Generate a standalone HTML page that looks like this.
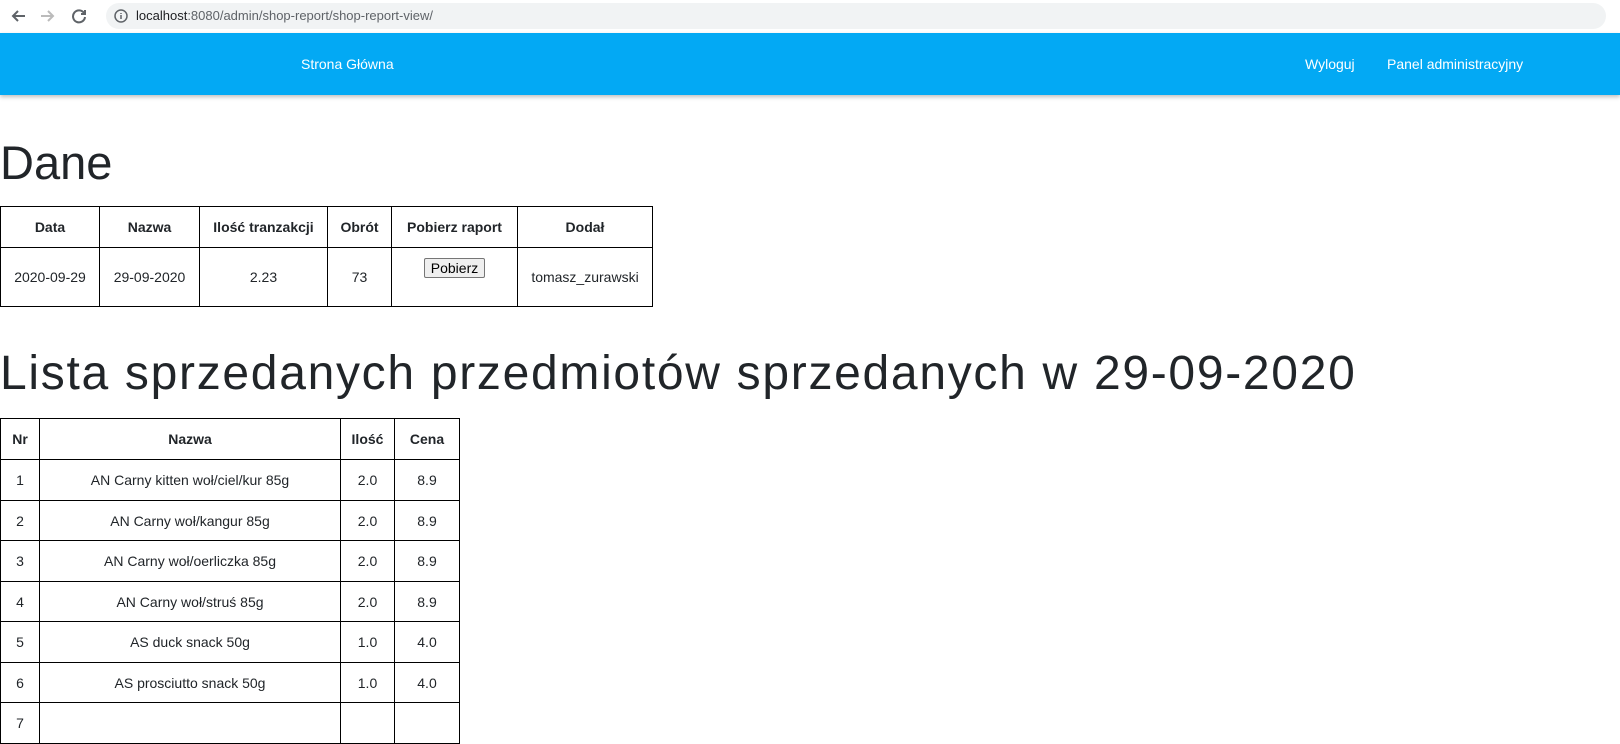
<!DOCTYPE html>
<html><head><meta charset="utf-8"><style>
body{margin:0;width:1620px;height:735px;overflow:hidden;background:#fff;font-family:"Liberation Sans",sans-serif;color:#212529;position:relative}
.chrome{position:absolute;left:0;top:0;width:1620px;height:33px;background:#fff}
.url{position:absolute;left:106px;top:3px;width:1500px;height:26px;border-radius:13px;background:#f1f3f4;font-size:13px;line-height:26px;color:#202124}
.nav{position:absolute;left:0;top:33px;width:1620px;height:62px;background:#03a9f4;box-shadow:0 2px 4px rgba(0,0,0,.25);color:#fff;font-size:14px}
.nav span{position:absolute;top:23px}
h1{position:absolute;left:0;margin:0;font-weight:normal;font-size:47px;line-height:1;color:#212529}
table{position:absolute;left:0;border-collapse:collapse;font-size:14px;table-layout:fixed}
td,th{border:1px solid #000;text-align:center;padding:0}
th{font-weight:bold}
</style></head><body>
<div class="chrome">
<svg style="position:absolute;left:10px;top:8px" width="80" height="16" viewBox="0 0 80 16" fill="none" stroke-width="2"><path d="M15 8H3M8 3L3 8l5 5" stroke="#5f6368"/><path d="M31 8h12M38 3l5 5-5 5" stroke="#bbb"/><path d="M74 5a6 6 0 1 0 1 4" stroke="#5f6368"/><path d="M75 2v4h-4" stroke="#5f6368"/></svg>
<div class="url"><svg style="position:absolute;left:8px;top:6px" width="14" height="14" viewBox="0 0 14 14"><circle cx="7" cy="7" r="6" fill="none" stroke="#5f6368" stroke-width="1.5"/><path d="M7 6v4M7 4v1" stroke="#5f6368" stroke-width="1.5"/></svg><span style="position:absolute;left:30px">localhost<span style="color:#5f6368">:8080/admin/shop-report/shop-report-view/</span></span></div>
</div>
<div class="nav"><span style="left:301px">Strona Główna</span><span style="left:1305px">Wyloguj</span><span style="left:1387px">Panel administracyjny</span></div>
<h1 style="top:139px">Dane</h1>
<table style="top:206px;width:653px">
<colgroup><col style="width:99px"><col style="width:100px"><col style="width:128px"><col style="width:64px"><col style="width:126px"><col style="width:135px"></colgroup>
<tr style="height:41px"><th>Data</th><th>Nazwa</th><th>Ilość tranzakcji</th><th>Obrót</th><th>Pobierz raport</th><th>Dodał</th></tr>
<tr style="height:59px"><td>2020-09-29</td><td>29-09-2020</td><td>2.23</td><td>73</td><td style="vertical-align:top;padding-top:10px"><button style="font-family:inherit;font-size:14px;padding:1px 6px;border:1px solid #767676;border-radius:2px;background:#efefef">Pobierz</button></td><td>tomasz_zurawski</td></tr>
</table>
<h1 style="top:350px;font-size:48px;letter-spacing:1.7px">Lista sprzedanych przedmiotów sprzedanych w 29-09-2020</h1>
<table style="top:418px;width:460px">
<colgroup><col style="width:39px"><col style="width:301px"><col style="width:54px"><col style="width:65px"></colgroup>
<tr style="height:41px"><th>Nr</th><th>Nazwa</th><th>Ilość</th><th>Cena</th></tr>
<tr style="height:41px"><td>1</td><td>AN Carny kitten woł/ciel/kur 85g</td><td>2.0</td><td>8.9</td></tr>
<tr style="height:40px"><td>2</td><td>AN Carny woł/kangur 85g</td><td>2.0</td><td>8.9</td></tr>
<tr style="height:41px"><td>3</td><td>AN Carny woł/oerliczka 85g</td><td>2.0</td><td>8.9</td></tr>
<tr style="height:40px"><td>4</td><td>AN Carny woł/struś 85g</td><td>2.0</td><td>8.9</td></tr>
<tr style="height:41px"><td>5</td><td>AS duck snack 50g</td><td>1.0</td><td>4.0</td></tr>
<tr style="height:40px"><td>6</td><td>AS prosciutto snack 50g</td><td>1.0</td><td>4.0</td></tr>
<tr style="height:41px"><td>7</td><td>&nbsp;</td><td></td><td></td></tr>
</table>
</body></html>
